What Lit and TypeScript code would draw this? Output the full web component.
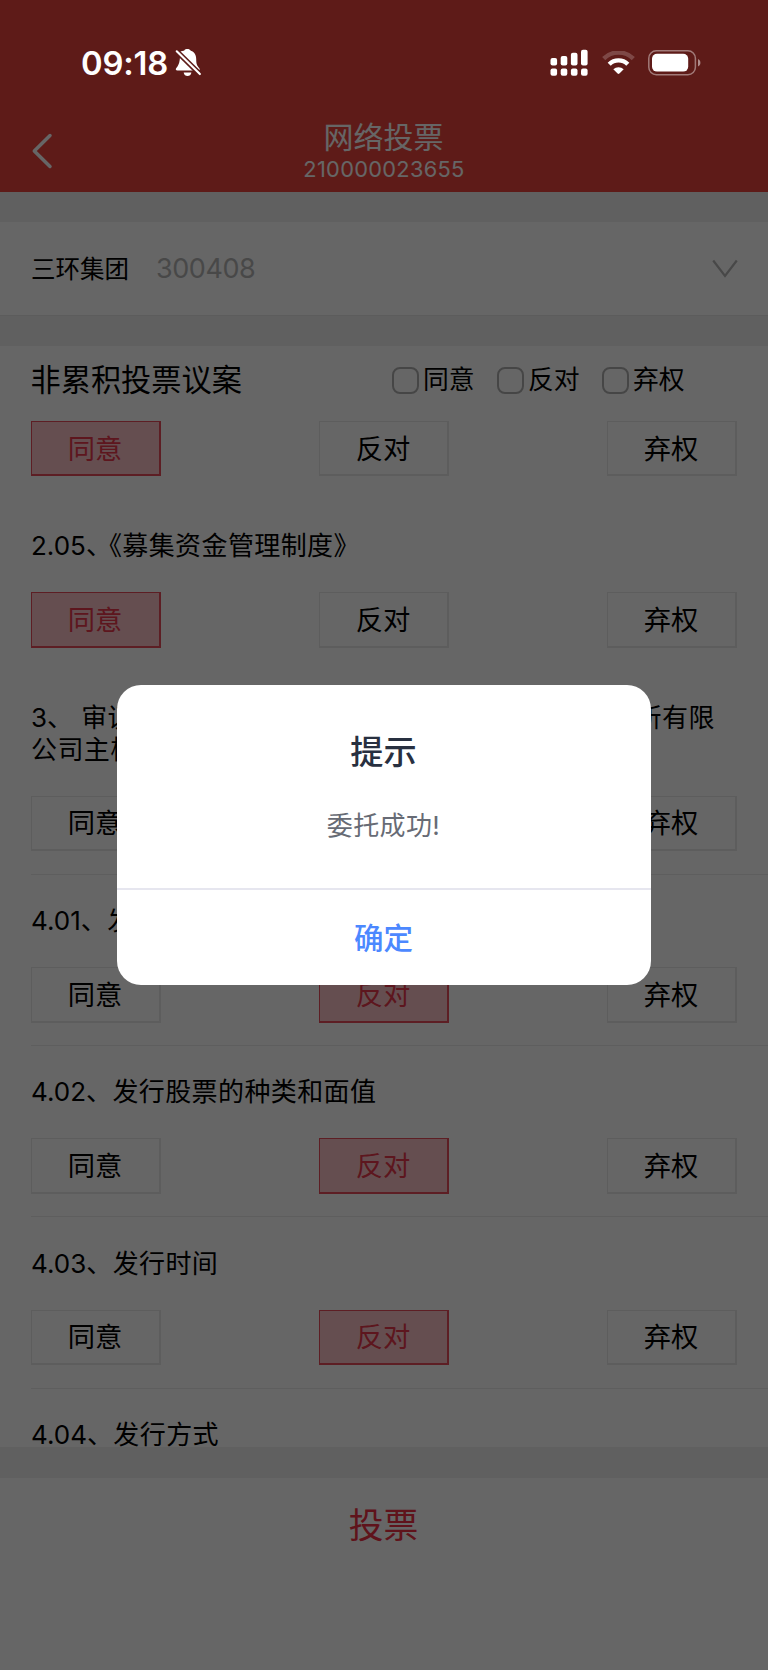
import { LitElement, html, css, nothing } from "lit";
import { customElement, property } from "lit/decorators.js";
import { classMap } from "lit/directives/class-map.js";

type Choice = "同意" | "反对" | "弃权";
const CHOICES: Choice[] = ["同意", "反对", "弃权"];

interface Motion {
  no?: string;
  text?: string;
  choice?: Choice;
  divider: boolean;
  tight?: boolean;
}

const MOTIONS: Motion[] = [
  { choice: "同意", divider: false },
  { no: "2.05", text: "《募集资金管理制度》", choice: "同意", divider: false, tight: true },
  { no: "3", text: " 审议关于公司拟发行境外股票并在香港联合交易所有限公司主板挂牌上市的议案", divider: true },
  { no: "4.01", text: "发行上市地点", choice: "反对", divider: true },
  { no: "4.02", text: "发行股票的种类和面值", choice: "反对", divider: true },
  { no: "4.03", text: "发行时间", choice: "反对", divider: true },
  { no: "4.04", text: "发行方式", divider: true },
];

@customElement("status-bar")
class StatusBar extends LitElement {
  static styles = css`
    :host { display: flex; align-items: center; justify-content: space-between; height: 125px; padding: 0 66px 0 81px; box-sizing: border-box; color: #fff; }
    .left, .right { display: flex; align-items: center; }
    .time { font: 600 32.800px/40px Inter, sans-serif; letter-spacing: -0.200px; width: 94px; white-space: nowrap; }
    svg { display: block; }
    .bell { margin-top: 1px; }
    .wifi { margin-left: 13.500px; }
    .battery { margin-left: 13.500px; }
  `;
  render() {
    return html`
      <div class="left">
        <span class="time">09:18</span>
        <svg class="bell" width="27" height="28" viewBox="0 0 28 29" fill="#fff">
          <path d="M5 3.2C7 1.6 8.5 1.9 9.4 1.7C10.2.3 11.6 0 13 0s2.600.5 3.400 1.700C20.5 2.800 22 6.500 22 10.500c0 5 .8 6.300 3.200 9.500c.7 1 .4 2.200-.4 2.600z M5.200 8L19.200 22.200H2.400C.9 22.200.4 21 1.200 19.900C3.600 17 4.800 14.500 5.200 8z"/>
          <path d="M9 24.300h8c-.3 2.400-2 3.700-4 3.700S9.300 26.700 9 24.300z"/>
          <path d="M1.800 2.400L25.800 26" stroke="#5e1b18" stroke-width="5.500" fill="none"/>
          <path d="M1.800 2.400L25.800 26" stroke="#fff" stroke-width="2.200" stroke-linecap="round" fill="none"/>
        </svg>
      </div>
      <div class="right">
        <svg width="38" height="28" viewBox="0 0 38 28" fill="#fff">
          <rect x="0.500" y="8.900" width="6.600" height="7.600" rx="2"/><rect x="10.700" y="7" width="6.600" height="9.500" rx="2"/>
          <rect x="20.900" y="3.700" width="6.600" height="12.800" rx="2"/><rect x="31" y="0.700" width="6.600" height="15.800" rx="2"/>
          <rect x="0.500" y="19.400" width="6.600" height="7.300" rx="2"/><rect x="10.700" y="19.400" width="6.600" height="7.300" rx="2"/>
          <rect x="20.900" y="19.400" width="6.600" height="7.300" rx="2"/><rect x="31" y="19.400" width="6.600" height="7.300" rx="2"/>
        </svg>
        <svg class="wifi" width="33" height="24" viewBox="0 0 33 24" fill="none" stroke="#fff">
          <path d="M1.700 7.600A21 21 0 0 1 31.300 7.600" stroke-width="4.400" opacity=".2"/>
          <path d="M7.200 13.200A13.300 13.300 0 0 1 25.800 13.200" stroke-width="4.400"/>
          <path d="M11.300 18.200a7.700 7.700 0 0 1 10.400 0l-4.300 4.300q-.9.8-1.800 0z" fill="#fff" stroke="none"/>
        </svg>
        <svg class="battery" width="54" height="26" viewBox="0 0 54 26">
          <rect x="0.800" y="0.800" width="46.600" height="23.900" rx="7.500" fill="none" stroke="#fff" stroke-opacity=".42" stroke-width="1.500"/>
          <rect x="4" y="3.800" width="36.200" height="17.800" rx="5" fill="#fff"/>
          <path d="M50 9c3.200 1.400 3.200 6.100 0 7.500z" fill="#fff" opacity=".5"/>
        </svg>
      </div>`;
  }
}

@customElement("motion-item")
class MotionItem extends LitElement {
  @property({ attribute: false }) motion!: Motion;
  static styles = css`
    :host { display: block; padding-left: 31px; }
    .body { border-bottom: 1px solid transparent; padding-bottom: 22.400px; }
    .divider { border-bottom-color: #ebebeb; }
    .title { font-size: 26px; line-height: 32px; letter-spacing: 0.400px; padding: 30.400px 48px 30px 0; }
    .no { letter-spacing: 0; }
    .tight { letter-spacing: -3px; }
    .choices { display: flex; justify-content: space-between; padding-right: 31px; }
    .compact { padding-top: 6.800px; }
    .choice { width: 130px; height: 55.600px; box-sizing: border-box; border: solid #e9e9e9; border-width: 1px 2px 2px 1px; display: flex; align-items: center; justify-content: center; font-size: 27.300px; line-height: 40px; padding: 3px 1px 0 0; }
    .picked { background: #fcc4c9; border-color: #e94b5b; color: #e8384c; }
  `;
  render() {
    const m = this.motion;
    return html`
      <div class=${classMap({ body: true, divider: m.divider })}>
        ${m.no ? html`<div class="title"><span class="no">${m.no}</span><span class=${classMap({ tight: !!m.tight })}>、</span>${m.text}</div>` : nothing}
        <div class=${classMap({ choices: true, compact: !m.no })}>
          ${CHOICES.map((c) => html`<div class=${classMap({ choice: true, picked: c === m.choice })}>${c}</div>`)}
        </div>
      </div>`;
  }
}

@customElement("app-root")
class AppRoot extends LitElement {
  static styles = css`
    :host { display: block; position: relative; width: 768px; height: 1670px; overflow: hidden; background: #fff; color: #000; font-family: Inter, "Noto Sans CJK SC", sans-serif; }
    .page { display: flex; flex-direction: column; height: 100%; }
    .header { height: 192px; flex: none; box-sizing: border-box; padding: 118px 31px 0; background: #eb443c; color: #fff; display: grid; grid-template-columns: 30px 1fr 30px; align-items: start; }
    .back { margin-top: 14px; display: block; }
    .heading { text-align: center; }
    .name { font-size: 30px; line-height: 38px; padding-right: 1px; }
    .account { font-size: 21.800px; line-height: 26px; letter-spacing: 0.300px; }
    .gap { flex: none; height: 30px; background: #f0f0f0; }
    .stock { flex: none; height: 94px; box-sizing: border-box; padding: 1px 30px 0 31px; border-bottom: 1px solid #e6e6e6; display: flex; align-items: center; }
    .stock-name { font-size: 24.500px; line-height: 36px; width: 125px; }
    .code { flex: 1; font-size: 27px; line-height: 36px; color: #b5b5b5; letter-spacing: -0.450px; }
    .section { flex: none; height: 68px; display: flex; align-items: center; justify-content: space-between; padding: 0 83.500px 0 30.500px; }
    .section-name { font-size: 30.200px; line-height: 44px; }
    .checks { display: flex; gap: 22px; }
    .check { display: flex; align-items: center; gap: 4.500px; width: 83px; font-size: 25.800px; line-height: 36px; white-space: nowrap; }
    .box { width: 27px; height: 27px; box-sizing: border-box; border: 2px solid #b0b0b0; border-radius: 8px; flex: none; }
    .list { flex: none; height: 1033px; overflow: hidden; }
    .footer-gap { height: 31px; }
    .footer { flex: 1; box-sizing: border-box; padding: 22px 1px 0 0; text-align: center; font-size: 34.800px; line-height: 50px; color: #ee3045; }
    .mask { position: absolute; inset: 0; background: rgba(0, 0, 0, 0.6); display: flex; align-items: center; justify-content: center; }
    .status { position: absolute; top: 0; left: 0; right: 0; }
    .dialog { width: 534px; height: 300.500px; border-radius: 24px; background: #fff; display: flex; flex-direction: column; text-align: center; overflow: hidden; }
    .content { height: 205.200px; flex: none; box-sizing: border-box; padding: 43px 1px 0 0; border-bottom: 2px solid #e6e6ef; }
    .dialog-title { font-size: 33.200px; line-height: 48px; font-weight: 500; color: #283040; }
    .message { font-size: 26px; line-height: 40px; margin-top: 30.500px; color: #676b75; letter-spacing: 0.400px; }
    .confirm { font-size: 29.500px; line-height: 97px; font-weight: 500; color: #4c88ff; padding-right: 1px; }
  `;
  render() {
    return html`
      <div class="page">
        <div class="header">
          <svg class="back" width="24" height="38" viewBox="0 0 24 38" fill="none" stroke="#fff" stroke-width="3.500" stroke-linecap="round" stroke-linejoin="round"><path d="M19 3.500L3.300 19L19 34.500"/></svg>
          <div class="heading"><div class="name">网络投票</div><div class="account">210000023655</div></div>
        </div>
        <div class="gap"></div>
        <div class="stock">
          <span class="stock-name">三环集团</span><span class="code">300408</span>
          <svg width="26" height="20" viewBox="0 0 26 20" fill="none" stroke="#b5b5b5" stroke-width="2.200"><path d="M1.200 1.500L13 17L24.800 1.500"/></svg>
        </div>
        <div class="gap"></div>
        <div class="section">
          <span class="section-name">非累积投票议案</span>
          <div class="checks">${CHOICES.map((c) => html`<label class="check"><span class="box"></span>${c}</label>`)}</div>
        </div>
        <div class="list">${MOTIONS.map((m) => html`<motion-item .motion=${m}></motion-item>`)}</div>
        <div class="gap footer-gap"></div>
        <div class="footer">投票</div>
      </div>
      <div class="mask">
        <div class="dialog">
          <div class="content"><div class="dialog-title">提示</div><div class="message">委托成功!</div></div>
          <div class="confirm">确定</div>
        </div>
      </div>
      <status-bar class="status"></status-bar>`;
  }
}
